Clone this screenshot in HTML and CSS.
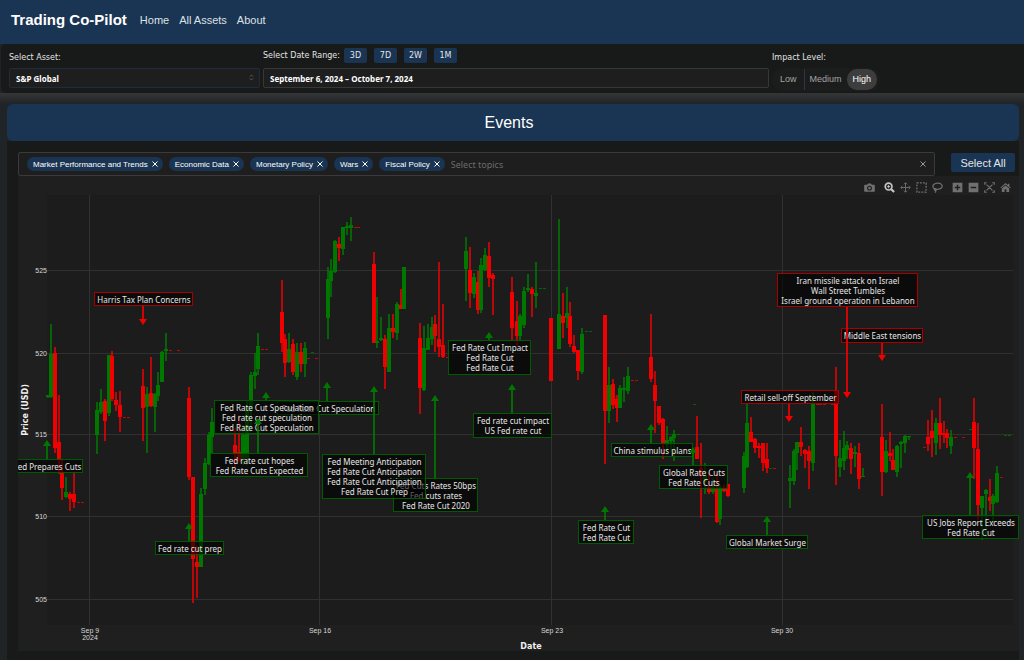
FILE: index.html
```html
<!DOCTYPE html>
<html lang="en">
<head>
<meta charset="utf-8">
<title>Trading Co-Pilot</title>
<link rel="stylesheet" href="styles.css">
</head>
<body>
<header class="navbar">
  <a class="brand" href="#">Trading Co-Pilot</a>
  <nav class="nav-links">
    <a href="#">Home</a>
    <a href="#">All Assets</a>
    <a href="#">About</a>
  </nav>
</header>

<section class="controls">
  <div class="control">
    <label class="control-label" for="asset">Select Asset:</label>
    <div class="select-wrap">
      <select id="asset" class="field field-asset"><option>S&amp;P Global</option></select>
      <svg class="select-icon" viewBox="0 0 6 8"><path d="M1 3 3 1 5 3M1 5 3 7 5 5"/></svg>
    </div>
  </div>
  <div class="control">
    <div class="range-row">
      <label class="control-label" for="dates">Select Date Range:</label>
      <button class="range-btn" type="button">3D</button>
      <button class="range-btn" type="button">7D</button>
      <button class="range-btn" type="button">2W</button>
      <button class="range-btn" type="button">1M</button>
    </div>
    <input id="dates" class="field" type="text" value="September 6, 2024 – October 7, 2024">
  </div>
  <fieldset class="control impact">
    <legend class="control-label">Impact Level:</legend>
    <div class="segments">
      <input type="radio" name="impact" id="low"><label for="low">Low</label>
      <input type="radio" name="impact" id="medium"><label for="medium">Medium</label>
      <input type="radio" name="impact" id="high" checked><label for="high">High</label>
    </div>
  </fieldset>
</section>

<main class="card">
  <h1 class="card-title">Events</h1>
  <div class="topics-row">
    <div class="topics">
      <span class="tag">Market Performance and Trends<button type="button" aria-label="Remove"><svg viewBox="0 0 6 6"><path d="M.5.5 5.5 5.5M5.5.5.5 5.5"/></svg></button></span>
      <span class="tag">Economic Data<button type="button" aria-label="Remove"><svg viewBox="0 0 6 6"><path d="M.5.5 5.5 5.5M5.5.5.5 5.5"/></svg></button></span>
      <span class="tag">Monetary Policy<button type="button" aria-label="Remove"><svg viewBox="0 0 6 6"><path d="M.5.5 5.5 5.5M5.5.5.5 5.5"/></svg></button></span>
      <span class="tag">Wars<button type="button" aria-label="Remove"><svg viewBox="0 0 6 6"><path d="M.5.5 5.5 5.5M5.5.5.5 5.5"/></svg></button></span>
      <span class="tag">Fiscal Policy<button type="button" aria-label="Remove"><svg viewBox="0 0 6 6"><path d="M.5.5 5.5 5.5M5.5.5.5 5.5"/></svg></button></span>
      <input class="topics-input" type="text" placeholder="Select topics" aria-label="Select topics">
      <button class="clear" type="button" aria-label="Clear"><svg viewBox="0 0 6 6"><path d="M.5.5 5.5 5.5M5.5.5.5 5.5"/></svg></button>
    </div>
    <button class="select-all" type="button">Select All</button>
  </div>
  <div class="chart">
    <svg id="plot" class="plot" viewBox="18 176 1001 475" role="img" aria-label="Price chart with events"></svg>
    <div class="modebar">
      <button type="button" aria-label="Download"><svg viewBox="0 0 12 12"><path class="solid" fill-rule="evenodd" d="M1 3h2.500l1-1.500h3l1 1.500H11q.8 0 .8.800v6q0 .700-.8.700H1q-.8 0-.8-.700v-6Q.2 3 1 3zM6 4a2.700 2.700 0 1 0 .01 0zM6 5.200a1.500 1.500 0 1 1-.01 0z"/></svg></button>
      <button class="split active" type="button" aria-label="Zoom"><svg viewBox="0 0 12 12"><circle cx="5" cy="5" r="3.700" stroke-width="1.800"/><path d="M7.800 7.800 11 11" stroke-width="2.400"/><path d="M3.200 5h3.600M5 3.200v3.600" stroke-width="1"/></svg></button>
      <button type="button" aria-label="Pan"><svg viewBox="0 0 12 12"><path d="M6 1v10M1 6h10M4.300 2.500 6 .8 7.700 2.500M4.300 9.500 6 11.200 7.700 9.500M2.500 4.300.8 6 2.500 7.700M9.500 4.300 11.200 6 9.500 7.700"/></svg></button>
      <button type="button" aria-label="Box select"><svg viewBox="0 0 12 12"><path d="M1 1h10v10H1z" stroke-width="1.400" stroke-dasharray="2 1.300"/></svg></button>
      <button type="button" aria-label="Lasso select"><svg viewBox="0 0 12 12"><path d="M3 7.500C.8 6.500.3 4.300 2 2.700 4 .9 8 .7 10 2.300c2 1.600 1.200 4.300-1.500 5.200-1.800.6-4 .5-5.500 0 1.400-.6 2.200.7 1.200 1.500-1 .7-2.200-.5-1.200-1.500M4.200 9c.2 1-.2 1.800-1 2.500" stroke-width="1.300"/></svg></button>
      <button class="split" type="button" aria-label="Zoom in"><svg viewBox="0 0 12 12"><path class="solid" fill-rule="evenodd" d="M.7.7h10.600v10.600H.7zM5.200 3v2.200H3v1.600h2.200V9h1.600V6.800H9V5.200H6.800V3z"/></svg></button>
      <button type="button" aria-label="Zoom out"><svg viewBox="0 0 12 12"><path class="solid" fill-rule="evenodd" d="M.7.7h10.600v10.600H.7zM3 5.200v1.600h6V5.200z"/></svg></button>
      <button type="button" aria-label="Autoscale"><svg viewBox="0 0 12 12"><path d="M.8 3V.8H3M9 .8h2.200V3M11.200 9v2.200H9M3 11.200H.8V9M2.800 2.800l6.400 6.400M9.200 2.800 2.800 9.200" stroke-width="1.300"/></svg></button>
      <button type="button" aria-label="Reset axes"><svg viewBox="0 0 12 12"><path class="solid" d="M6 1 .3 6.200l.8.700L6 2.600l4.900 4.300.8-.7-1.500-1.400V1.800H8.700v1.600zM6 3.700 2 7.200V11h3V8h2v3h3V7.200z"/></svg></button>
    </div>
  </div>
</main>
<script src="chart.js"></script>
</body>
</html>
```
FILE: styles.css
```css
* { box-sizing: border-box; }

body {
  margin: 0;
  min-height: 100vh;
  background: #212426;
  color: #e4e4e4;
  font-family: "Liberation Sans", Arial, sans-serif;
  overflow: hidden;
}

button, input, select { font: inherit; color: inherit; margin: 0; }
button { border: 0; padding: 0; background: none; }
a { color: inherit; text-decoration: none; }

.navbar {
  display: flex;
  align-items: center;
  gap: 13px;
  height: 44px;
  padding: 0 11px 5px;
  background: #1a3453;
}
.brand { font-size: 15px; font-weight: bold; color: #fff; }
.nav-links { display: flex; gap: 10px; font-size: 11px; color: #dde1e6; }

.controls {
  display: grid;
  grid-template-columns: 251fr 506fr 250fr;
  gap: 3px;
  margin-left: 1px;
  height: 49px;
  padding: 3px 2px 0 8px;
  background: #181a19;
  border-radius: 5px 0 0 5px;
}
.control {
  display: flex;
  flex-direction: column;
  justify-content: flex-end;
  height: 41px;
  min-width: 0;
  font-family: "Noto Sans", sans-serif;
}
.control-label { font-family: "DejaVu Sans", sans-serif; font-size: 8px; line-height: 12px; color: #e4e4e4; }
.control > .control-label { margin-bottom: 4px; }
.range-row { display: flex; align-items: center; gap: 7px; margin-bottom: 5px; }
.range-row .control-label { margin-right: -3px; }
.range-btn {
  width: 23px;
  height: 15px;
  border-radius: 2px;
  background: #1a3453;
  font-family: "DejaVu Sans", sans-serif;
  font-size: 8px;
  line-height: 15px;
}
.field {
  width: 100%;
  height: 20px;
  padding: 0 6px;
  border: 1px solid #363838;
  border-radius: 2px;
  background: #1e1e1e;
  font-size: 8px;
  font-weight: bold;
  color: #fff;
  appearance: none;
}
.field-asset { border-color: #1d2d40; }
.select-wrap { position: relative; display: flex; }
.select-icon { position: absolute; right: 6px; top: 6px; width: 5px; height: 7px; fill: none; stroke: #666; }

.impact { display: block; margin: 0; padding: 5px 0 0; border: 0; }
.impact legend { padding: 0; float: left; }
.segments {
  position: relative;
  clear: both;
  display: flex;
  align-items: center;
  width: 108px;
  height: 23px;
  margin-top: 4px;
  border-radius: 10px;
  background: #1b1c1c;
  font-size: 9px;
  color: #a5a5a5;
  font-family: "Liberation Sans", Arial, sans-serif;
}
.segments input { position: absolute; opacity: 0; }
.segments label { padding: 5px 6px; line-height: 11px; }
.segments label[for="low"] { padding-left: 8px; padding-right: 7px; border-right: 1px solid #353535; }
.segments label[for="medium"] { padding-left: 5px; padding-right: 5px; }
.segments input:checked + label { padding: 5px 6px; background: #3d3d3d; color: #fff; border-radius: 10px; }

.card {
  padding: 11px 5px 9px 7px;
  background: linear-gradient(#343637, #212426 11px);
}
.card-title {
  margin: 0;
  border-radius: 6px;
  background: #1a3453;
  font-size: 16px;
  font-weight: normal;
  line-height: 37px;
  text-align: center;
  padding-right: 8px;
  color: #fff;
}
.topics-row {
  display: flex;
  align-items: center;
  gap: 16px;
  padding: 11px 4px 0 11px;
  background: #181a19;
}
.topics {
  display: flex;
  flex: 1;
  align-items: center;
  gap: 6px;
  height: 24px;
  padding: 0 8px;
  border: 1px solid #3a3a3a;
  border-radius: 2px;
  background: #1e1e1e;
  font-family: "Liberation Sans", Arial, sans-serif;
}
.topics svg { display: block; width: 6px; height: 6px; fill: none; stroke: currentColor; }
.tag {
  display: flex;
  align-items: center;
  gap: 4px;
  height: 14px;
  padding: 0 5px 0 6px;
  border-radius: 7px;
  background: #1a3453;
  font-size: 8px;
  color: #fff;
  white-space: nowrap;
}
.topics-input { flex: 1; min-width: 0; border: 0; padding: 0; background: none; font-family: "Noto Sans", sans-serif; font-size: 9px; outline: 0; }
.topics-input::placeholder { color: #6b6b6b; opacity: 1; }
.clear { color: #999; }
.select-all {
  width: 64px;
  height: 19px;
  margin-bottom: 3px;
  border-radius: 2px;
  background: #1a3453;
  font-size: 11px;
}

.chart { position: relative; padding: 0 0 9px 11px; background: #181a19; }
.plot { display: block; width: 100%; height: auto; background: #1f1f1f; }
.modebar { position: absolute; top: 5px; right: 7px; display: flex; gap: 4px; }
.modebar button { width: 12px; height: 12px; color: #707070; }
.modebar .split { margin-left: 4px; }
.modebar .active { color: #c4c4c4; }
.modebar svg { display: block; width: 11px; height: 11px; fill: none; stroke: currentColor; }
.modebar .solid { fill: currentColor; stroke: none; }

.area { fill: #1c1c1c; }
.grid { stroke: #303030; stroke-width: 1; }
.tick { fill: #d8d8d8; font: 7px "Liberation Sans", Arial, sans-serif; }
.axis-title { fill: #f0f0f0; font: bold 8px "DejaVu Sans", sans-serif; text-anchor: middle; }
.up { fill: #007800; }
.down { fill: #f00000; }
.wick { opacity: 0.75; }
.note-box { fill: #000; fill-opacity: 0.6; stroke-width: 1; }
.note-up .note-box { stroke: #005a00; }
.note-down .note-box { stroke: #a80000; }
.note-up .arrow { stroke: #007800; fill: #007800; }
.note-down .arrow { stroke: #f00000; fill: #f00000; }
.arrow { stroke-width: 2; opacity: 0.85; }
.arrow-head { stroke-width: 0; opacity: 1; }
.note-text { fill: #e6e6e6; font: 8px "Noto Sans", sans-serif; text-anchor: middle; }
```
FILE: chart.js
```javascript
const NS = "http://www.w3.org/2000/svg";
const plot = document.getElementById("plot");

function add(parent, name, attrs, text) {
  const el = document.createElementNS(NS, name);
  for (const key in attrs) el.setAttribute(key, attrs[key]);
  if (text) el.textContent = text;
  parent.appendChild(el);
  return el;
}

add(plot, "rect", { class: "area", x: 47, y: 195, width: 966, height: 430 });
[90, 320, 552, 783].forEach(x => add(plot, "path", { class: "grid", d: `M${x - 0.5} 195V625` }));
[271, 354, 435, 517, 600].forEach((y, i) => {
  add(plot, "path", { class: "grid", d: `M47 ${y - 0.5}H1013` });
  add(plot, "text", { class: "tick", x: 47, y: y + 2, "text-anchor": "end" }, String(525 - i * 5));
});
[[90, "Sep 9"], [320, "Sep 16"], [552, "Sep 23"], [782, "Sep 30"]].forEach(([x, t]) =>
  add(plot, "text", { class: "tick", x, y: 633, "text-anchor": "middle" }, t));
add(plot, "text", { class: "tick", x: 90, y: 640, "text-anchor": "middle" }, "2024");
add(plot, "text", { class: "axis-title", x: 531, y: 649 }, "Date");
add(plot, "text", { class: "axis-title", transform: "translate(28 410) rotate(-90)" }, "Price (USD)");

// slot centre, high, low, body top, body bottom, direction
const candles = `
48 395 398 395 397 u;51 324 398 354 397 u;55 347 453 353 448 d;59 395 474 442 459 d;62 460 500 472 488 d;66 477 498 492 497 u;70 492 511 494 499 d;74 473 508 494 502 d
97 402 454 410 435 u;101 389 414 402 412 u;105 399 441 401 421 d;109 355 416 355 413 u;112 351 401 356 399 d;116 392 411 400 405 d;120 391 432 405 417 d
143 369 441 386 408 d;147 387 453 394 407 u;151 357 407 393 406 d;155 393 432 394 407 u;158 372 401 385 396 u;162 351 382 352 382 u;166 333 361 349 351 u
189 387 480 398 477 d;193 477 603 477 559 d;197 546 598 562 567 d;201 488 567 494 567 u;205 458 495 463 489 u;209 432 465 435 464 u;212 408 454 422 437 u
235 428 468 445 453 d;239 415 462 452 462 d;243 425 465 435 460 u;247 400 465 410 458 u;251 372 430 375 410 u;255 353 389 372 376 u;258 333 375 346 369 u
282 280 352 312 343 d;285 334 377 339 363 d;289 333 363 349 362 u;293 339 375 344 372 d;297 343 380 352 377 u;301 343 372 352 364 d;305 342 377 348 364 u
328 267 339 279 318 u;331 259 297 271 281 u;335 240 273 241 272 u;339 237 261 244 248 d;343 227 255 227 249 u;347 222 235 226 228 u;351 217 241 225 228 u
374 252 343 264 343 d;377 297 348 341 343 u;381 317 341 338 340 u;385 335 389 339 367 d;389 314 372 328 372 u;393 314 338 328 332 d;397 302 340 304 333 u;401 289 309 305 309 d;404 267 309 267 309 u
420 323 414 338 388 d;424 326 391 348 390 u;428 324 350 338 350 u;432 317 345 327 339 u;435 315 352 324 336 d;439 262 357 339 347 d;443 304 358 345 357 d
466 237 301 251 269 u;470 247 308 270 293 d;474 273 298 277 294 u;478 271 314 282 310 d;481 258 313 265 310 u;485 248 271 255 270 u;489 242 287 256 278 d;493 273 315 275 279 d
512 277 340 292 328 d;517 301 347 321 336 d;520 314 340 316 336 u;524 287 328 291 325 u;528 274 292 288 290 u;532 287 317 289 294 d;536 262 308 293 296 u
551 318 381 318 381 d;559 219 349 314 349 u;563 293 338 316 323 d;567 287 328 313 318 u;570 302 347 316 344 d;574 335 353 346 352 d;578 350 380 350 371 d;582 328 374 334 372 u
605 315 464 315 411 d;609 367 423 385 411 u;613 379 409 384 405 d;617 395 422 399 408 d;620 385 408 388 408 u;624 377 402 388 390 u;628 367 394 376 391 u
651 314 382 357 379 d;655 371 433 385 401 d;659 406 425 406 423 d;663 418 459 419 443 d;667 426 455 440 445 u;671 436 452 437 441 u;674 430 461 434 438 u
697 416 459 447 459 d;701 443 518 468 476 d;705 463 494 475 482 u;709 472 494 487 492 d;713 478 494 487 492 u;717 473 523 489 522 d;720 485 525 487 519 u;724 485 492 488 491 d;728 484 497 484 496 d
744 452 493 456 488 u;747 404 468 423 467 u;751 417 442 432 442 d;755 438 453 439 448 d;759 443 458 446 448 d;763 443 471 443 463 d;767 443 473 459 468 d
790 465 508 478 481 u;794 449 485 451 481 u;797 442 470 442 453 u;801 427 456 442 447 d;805 449 468 450 454 d;809 446 489 451 461 d;813 392 471 403 463 u
836 367 485 390 456 d;840 440 477 458 467 u;844 431 470 448 461 u;847 441 459 445 450 u;851 443 474 448 459 d;855 446 467 452 454 u;859 443 489 453 479 d;863 468 477 476 477 u
882 404 496 437 472 d;886 440 473 451 472 u;890 432 461 453 456 d;893 449 470 460 470 d;897 445 477 446 472 u;901 441 468 442 444 u;905 435 453 436 443 u;909 436 440 436 437 u
928 420 451 437 444 d;932 410 457 431 438 d;936 418 455 423 443 u;940 398 449 423 435 d;944 421 443 433 435 d;947 429 448 433 438 d;951 430 454 437 446 u
974 398 479 422 448 d;978 423 520 449 505 d;982 496 540 496 508 u;986 489 537 490 494 u;990 479 511 497 501 d;993 494 523 496 504 u;997 466 503 473 502 u`;
candles.trim().split(/[;\n]/).forEach(row => {
  const [x, hi, lo, top, bottom, dir] = row.trim().split(" ");
  const cls = dir === "u" ? "up" : "down";
  add(plot, "rect", { class: cls + " wick", x: x - 1, y: hi, width: 2, height: lo - hi });
  add(plot, "rect", { class: cls, x: x - 2, y: top, width: 4, height: Math.max(1, bottom - top) });
});

// quiet sessions: slot centre, price level, direction
const flats = `78 502 d;82 502 d;124 417 d;128 417 d;170 350 d;178 350 d;262 349 d;266 349 d;308 358 d;312 352 u;316 358 d;355 227 d;358 227 d;447 357 d;540 288 u;544 288 u;586 331 u;590 331 u;632 380 d;636 380 d;678 434 u;694 404 u;770 468 u;774 468 d;817 404 d;820 404 d;824 404 d;832 404 d;924 447 d;955 437 d;963 437 d;970 429 u;1001 477 d;1005 435 u;1009 435 u`;
flats.split(";").forEach(row => {
  const [x, y, dir] = row.split(" ");
  add(plot, "rect", { class: (dir === "u" ? "up" : "down") + " wick", x: x - 1, y, width: 3, height: 1 });
});

// left, top, right, bottom, arrow x, arrow tip, direction, lines
const notes = [
  [94, 293, 192, 305, 143, 325, "down", ["Harris Tax Plan Concerns"]],
  [11, 460, 82, 472, 47, 440, "up", ["Fed Prepares Cuts"]],
  [155, 542, 223, 554, 189, 523, "up", ["Fed rate cut prep"]],
  [277, 402, 378, 414, 327, 382, "up", ["Fed Rate Cut Speculation"]],
  [214, 401, 318, 433, 266, 392, "up", ["Fed Rate Cut Speculation", "Fed rate cut speculation", "Fed Rate Cut Speculation"]],
  [210, 454, 307, 476, 258, 418, "up", ["Fed rate cut hopes", "Fed Rate Cuts Expected"]],
  [393, 479, 477, 511, 435, 395, "up", ["Fed Cuts Rates 50bps", "Fed cuts rates", "Fed Rate Cut 2020"]],
  [322, 455, 425, 498, 374, 386, "up", ["Fed Meeting Anticipation", "Fed Rate Cut Anticipation", "Fed Rate Cut Anticipation", "Fed Rate Cut Prep"]],
  [448, 341, 530, 374, 489, 332, "up", ["Fed Rate Cut Impact", "Fed Rate Cut", "Fed Rate Cut"]],
  [473, 414, 551, 437, 512, 384, "up", ["Fed rate cut impact", "US Fed rate cut"]],
  [578, 521, 633, 543, 605, 506, "up", ["Fed Rate Cut", "Fed Rate Cut"]],
  [611, 444, 692, 456, 651, 424, "up", ["China stimulus plans"]],
  [659, 466, 727, 488, 693, 447, "up", ["Global Rate Cuts", "Fed Rate Cuts"]],
  [726, 536, 807, 548, 767, 516, "up", ["Global Market Surge"]],
  [741, 391, 838, 403, 789, 422, "down", ["Retail sell-off September"]],
  [841, 329, 922, 342, 882, 361, "down", ["Middle East tensions"]],
  [777, 274, 917, 306, 847, 398, "down", ["Iran missile attack on Israel", "Wall Street Tumbles", "Israel ground operation in Lebanon"]],
  [922, 516, 1018, 538, 970, 472, "up", ["US Jobs Report Exceeds", "Fed Rate Cut"]]
];
notes.forEach(([l, t, r, b, x, tip, dir, lines]) => {
  const g = add(plot, "g", { class: "note-" + dir });
  const up = dir === "up";
  const base = up ? tip + 6 : tip - 6;
  add(g, "path", { class: "arrow", d: `M${x} ${up ? t : b}V${base}` });
  add(g, "path", { class: "arrow arrow-head", d: `M${x - 4} ${base}H${x + 4}L${x} ${tip}Z` });
  add(g, "rect", { class: "note-box", x: l + 0.5, y: t - 0.5, width: r - l, height: b - t + 1 });
  lines.forEach((line, i) => {
    add(g, "text", { class: "note-text", x: (l + r) / 2 + 1, y: t + 10 + i * 10 }, line);
  });
});
```
